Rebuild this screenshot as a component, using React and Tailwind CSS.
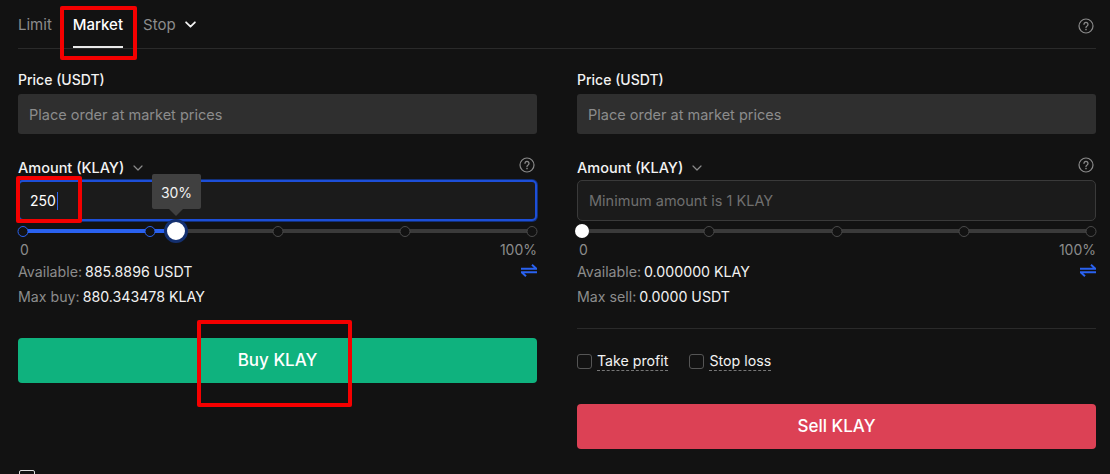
import React from "react";

const Help = () => (
  <svg width="16" height="16" viewBox="0 0 16 16" fill="none" className="block">
    <circle cx="8" cy="8" r="7" stroke="#8a8a8a" strokeWidth="1.2" />
    <path d="M6 6.3a2 2 0 1 1 3.1 1.7c-.7.4-1.1.8-1.1 1.6" stroke="#8a8a8a" strokeWidth="1.3" strokeLinecap="round" />
    <circle cx="8" cy="11.6" r=".8" fill="#8a8a8a" />
  </svg>
);

const Chevron = ({ color = "#8a8a8a", w = 1.2, size = 10 }) => (
  <svg width={size} height={size} viewBox="0 0 10 10" fill="none" className="block">
    <path d="M1 3l4 4 4-4" stroke={color} strokeWidth={w} strokeLinecap="round" strokeLinejoin="round" />
  </svg>
);

const Swap = () => (
  <svg width="16" height="13" viewBox="0 0 16 13" fill="none" className="block">
    <path d="M0 4.8h15.5L11 .8" stroke="#2a62f0" strokeWidth="2" />
    <path d="M16 8.2H.5L5 12.2" stroke="#2a62f0" strokeWidth="2" />
  </svg>
);

const marks = [0, 25, 50, 75, 100];

function Slider({ value, active }) {
  return (
    <div className="relative mx-[5px] h-[10px]">
      <div className="absolute left-0 right-0 top-[3px] h-[4px] bg-[#3a3a3a]" />
      <div className="absolute left-0 top-[3px] h-[4px] bg-[#2a62f0]" style={{ width: `${value}%` }} />
      {marks.map((m) => (
        <div
          key={m}
          className={`absolute top-0 h-[11px] w-[11px] -translate-x-1/2 rounded-full border bg-[#121212] ${m <= value && active ? "border-[#2a62f0]" : "border-[#4a4a4a]"}`}
          style={{ left: `${m}%` }}
        />
      ))}
      {active ? (
        <div className="absolute top-[-7px] h-[24px] w-[24px] -translate-x-1/2 rounded-full border-[3px] border-[#14306f] bg-white" style={{ left: `${value}%` }} />
      ) : (
        <div className="absolute top-[-2px] h-[14px] w-[14px] -translate-x-1/2 rounded-full bg-white" style={{ left: `${value}%` }} />
      )}
    </div>
  );
}

function Row({ k, v, mt }) {
  return (
    <div className={`flex h-[20px] items-center text-[14.2px] leading-5 ${mt}`}>
      <span className="text-[#8c8c8c]">{k}</span>
      <span className="ml-[3px] text-[#f2f2f2]">{v}</span>
    </div>
  );
}

function Column({ side }) {
  const buy = side === "buy";
  return (
    <div className="relative w-[519px]">
      <div className="flex h-[20px] items-center text-sm font-medium text-[#f2f2f2]">Price (USDT)</div>
      <div className="mt-[4px] flex h-[40px] items-center rounded-[3px] bg-[#2f2f2f] px-[11px] pt-px text-[14.5px] text-[#8c8c8c]">
        Place order at market prices
      </div>
      <div className="mt-[23px] flex h-[20px] items-center justify-between">
        <div className="flex items-center gap-[9px] pt-px text-[14.5px] font-medium text-[#f2f2f2]">
          Amount (KLAY) <Chevron />
        </div>
        <div className="-mt-[4px] mr-[2px]"><Help /></div>
      </div>
      {buy ? (
        <div className="relative mt-[3px] flex h-[41px] items-center rounded-[5px] border-2 border-[#1d4fd8] bg-[#1b1b1b] px-[10px] text-sm text-white shadow-[0_0_0_1px_#12307a]">
          250<span className="ml-px h-[18px] w-[1px] bg-[#2a62f0]" />
        </div>
      ) : (
        <div className="mt-[3px] flex h-[41px] items-center rounded-[5px] border border-[#3a3a3a] bg-[#1b1b1b] px-[11px] text-[14.5px] text-[#6f6f6f]">
          Minimum amount is 1 KLAY
        </div>
      )}
      <div className="relative mt-[5px]">
        <Slider value={buy ? 30 : 0} active={buy} />
        {buy && (
          <div className="absolute left-[134px] top-[-52px] flex h-[35px] w-[49px] items-center justify-center rounded-[2px] bg-[#404040] pt-[2px] text-sm text-[#f2f2f2]">
            30%
            <span className="absolute bottom-[-7px] left-[17px] h-0 w-0 border-x-[7px] border-t-[7px] border-x-transparent border-t-[#404040]" />
          </div>
        )}
      </div>
      <div className="mt-[4px] flex h-[20px] items-center justify-between text-sm text-[#8c8c8c]">
        <span className="pl-[2px]">0</span>
        <span>100%</span>
      </div>
      <div className="relative">
        <Row k="Available:" v={buy ? "885.8896 USDT" : "0.000000 KLAY"} mt="mt-[2px]" />
        <div className="absolute right-0 top-[2px]"><Swap /></div>
      </div>
      <Row k={buy ? "Max buy:" : "Max sell:"} v={buy ? "880.343478 KLAY" : "0.0000 USDT"} mt="mt-[5px]" />
      {buy ? (
        <div className="mt-[31px] flex h-[45px] items-center justify-center rounded-[4px] bg-[#0fb27e] text-[17px] font-medium text-white">
          Buy KLAY
        </div>
      ) : (
        <>
          <div className="mt-[21px] h-px bg-[#2a2a2a]" />
          <div className="mt-[22px] flex h-[20px] items-center text-[14.2px] text-[#f2f2f2]">
            <span className="h-[15px] w-[15px] rounded-[3px] border border-[#555]" />
            <span className="ml-[5px] border-b border-dashed border-[#777] leading-[18px]">Take profit</span>
            <span className="ml-[21px] h-[15px] w-[15px] rounded-[3px] border border-[#555]" />
            <span className="ml-[5px] border-b border-dashed border-[#777] leading-[18px]">Stop loss</span>
          </div>
          <div className="mt-[33px] flex h-[45px] items-center justify-center rounded-[4px] bg-[#dc4155] text-[17px] font-medium text-white">
            Sell KLAY
          </div>
        </>
      )}
    </div>
  );
}

export default function App() {
  return (
    <div className="relative h-[474px] w-[1110px] overflow-hidden bg-[#121212] pl-[18px] pr-[14px] font-['Inter','Noto_Sans',sans-serif] antialiased">
      <div className="flex h-[49px] items-start justify-between border-b border-[#2a2a2a] pt-[15px] text-[15px]">
        <div className="flex items-start">
          <span className="leading-5 text-[#8c8c8c]">Limit</span>
          <span className="relative ml-[21px] font-medium leading-5 text-white">
            Market
            <span className="absolute left-0 right-0 top-[31px] h-[2px] bg-[#e8e8e8]" />
          </span>
          <span className="ml-[20px] leading-5 text-[#8c8c8c]">Stop</span>
          <span className="ml-[9px] mt-[4px]"><Chevron color="#f2f2f2" w={1.6} size={11} /></span>
        </div>
        <div className="mr-[2px] mt-[3px]"><Help /></div>
      </div>
      <div className="mt-[21px] flex justify-between">
        <Column side="buy" />
        <Column side="sell" />
      </div>
      <div className="absolute left-[19px] top-[470px] h-[10px] w-[16px] rounded-[2px] border border-[#ddd]" />
      <div className="absolute left-[60px] top-[6px] h-[54px] w-[77px] rounded-[2px] border-4 border-[#f50000]" />
      <div className="absolute left-[16px] top-[176px] h-[47px] w-[66px] rounded-[2px] border-4 border-[#f50000]" />
      <div className="absolute left-[197px] top-[320px] h-[87px] w-[155px] rounded-[2px] border-4 border-[#f50000]" />
    </div>
  );
}
